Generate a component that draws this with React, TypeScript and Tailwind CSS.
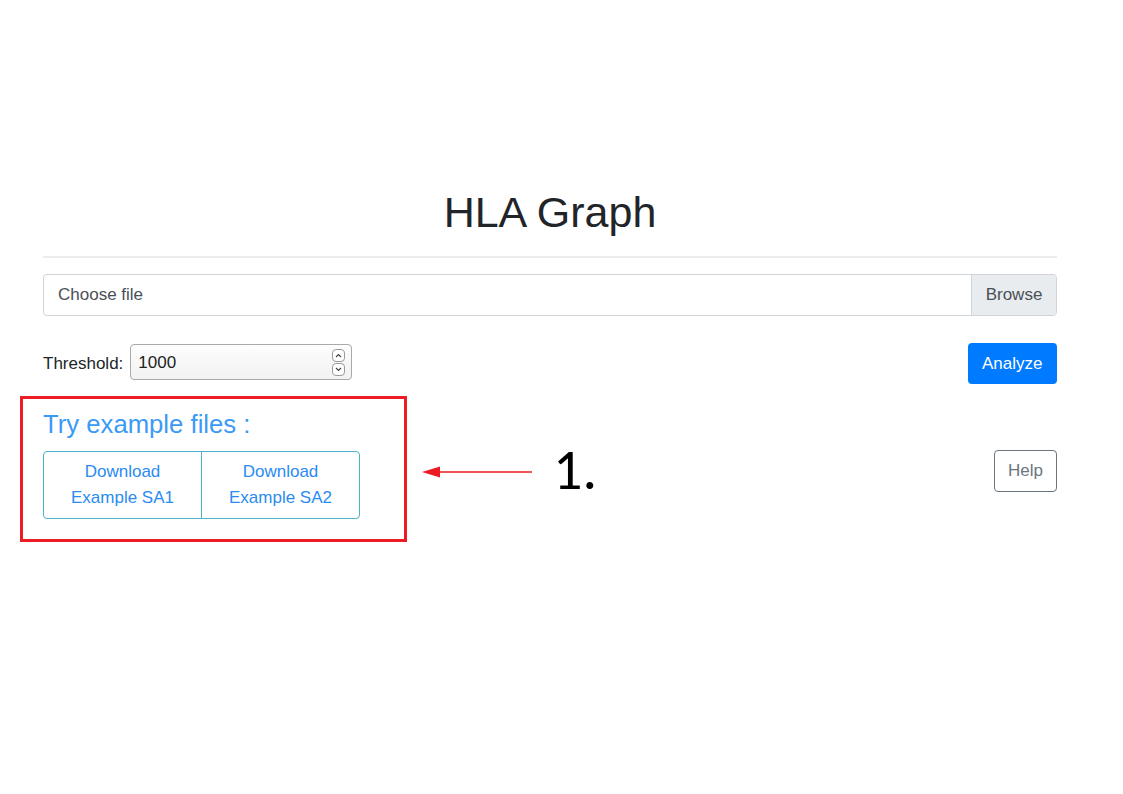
import React from 'react'

const Spinner = () => (
  <div className="flex flex-col gap-[1px] mr-[6px]">
    <div className="w-[13px] h-[13px] rounded-[4px] border border-[#9a9a9a] bg-white flex items-center justify-center">
      <svg width="7" height="5" viewBox="0 0 7 5">
        <path d="M1 4 L3.5 1.5 L6 4" fill="none" stroke="#444" strokeWidth="1.2" />
      </svg>
    </div>
    <div className="w-[13px] h-[13px] rounded-[4px] border border-[#9a9a9a] bg-white flex items-center justify-center">
      <svg width="7" height="5" viewBox="0 0 7 5">
        <path d="M1 1 L3.5 3.5 L6 1" fill="none" stroke="#444" strokeWidth="1.2" />
      </svg>
    </div>
  </div>
)

const App = () => {
  return (
    <div className="relative w-[1123px] h-[794px] bg-white text-[17px] text-[#212529] font-['Liberation_Sans',Arial,sans-serif]">
      <div className="ml-[43px] w-[1014px] pt-[186px]">
        <h1 className="text-center text-[43px] leading-[52px] font-normal">HLA Graph</h1>
        <div className="mt-[18px] h-[2px] bg-[#ececec]" />

        <div className="mt-[16px] flex h-[42px] rounded-[4px] border border-[#ced4da] overflow-hidden">
          <div className="flex-1 flex items-center pl-[14px] text-[#495057]">Choose file</div>
          <div className="w-[85px] flex items-center justify-center border-l border-[#ced4da] bg-[#e9ecef] text-[#495057]">
            Browse
          </div>
        </div>

        <div className="mt-[27px] flex items-start justify-between">
          <div className="mt-[1px] flex items-center gap-[7px]">
            <span className="pt-[4px]">Threshold:</span>
            <div className="w-[222px] h-[36px] flex items-center justify-between rounded-[4px] border border-[#a9a9a9] bg-gradient-to-b from-[#fdfdfd] to-[#f2f2f2]">
              <span className="pl-[7px] pt-[2px] text-[#222]">1000</span>
              <Spinner />
            </div>
          </div>
          <button className="h-[41px] px-[14.5px] rounded-[4px] bg-[#007bff] text-white">Analyze</button>
        </div>

        <h4 className="mt-[25px] text-[25.7px] leading-[31px] text-[#3a9af5]">Try example files :</h4>

        <div className="mt-[11px] flex items-start justify-between">
          <div className="flex rounded-[4px] border border-[#4bb3c3] text-[#2a8bf2] text-center">
            <div className="w-[158px] py-[7px] leading-[26px] border-r border-[#4bb3c3]">
              Download
              <br />
              Example SA1
            </div>
            <div className="w-[157px] py-[7px] leading-[26px]">
              Download
              <br />
              Example SA2
            </div>
          </div>
          <button className="-mt-[1px] w-[63px] h-[42px] rounded-[4px] border border-[#6c757d] text-[#6c757d]">Help</button>
        </div>
      </div>

      <div className="absolute left-[20px] top-[396px] w-[387px] h-[146px] border-[3px] border-[#ec1c24]" />
      <svg className="absolute left-[420px] top-[462px]" width="115" height="20" viewBox="0 0 115 20">
        <line x1="16" y1="10" x2="112" y2="10" stroke="#ec1c24" strokeWidth="1.5" />
        <path d="M2 10 L20 4.5 L20 15.5 Z" fill="#ec1c24" />
      </svg>
      <div className="absolute left-[553px] top-[436px] text-[58px] leading-[68px] text-black font-['Carlito','Liberation_Sans',sans-serif]">
        1.
      </div>
    </div>
  )
}

export default App
